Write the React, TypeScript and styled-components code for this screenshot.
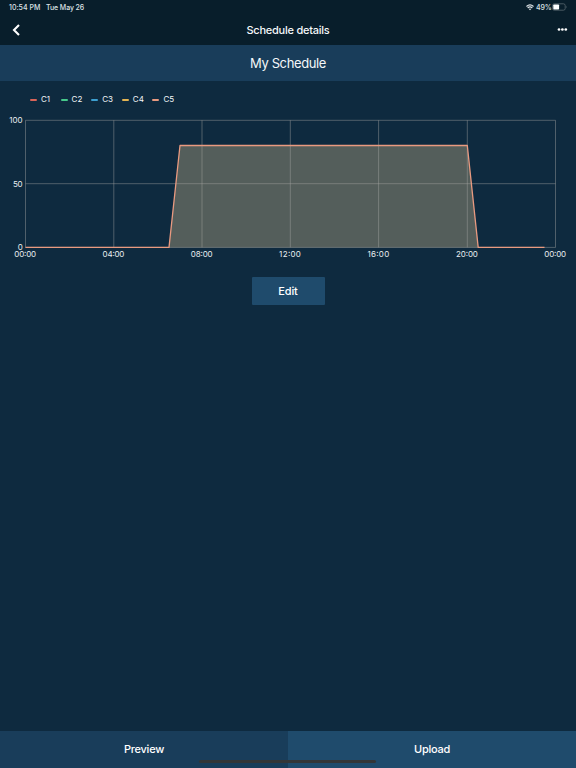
import React from "react";
import styled, { createGlobalStyle } from "styled-components";

const GlobalStyle = createGlobalStyle`
  * { box-sizing: border-box; }
  body { margin: 0; background: #0e2a3f; }
`;

const Screen = styled.main`
  display: flex;
  flex-direction: column;
  width: 100%;
  height: 100vh;
  min-height: 400px;
  position: relative;
  background: #0e2a3f;
  color: #f4f7f9;
  font-family: Inter, "Liberation Sans", sans-serif;
`;

const Header = styled.header`
  height: 45px;
  flex: none;
  background: #081e2b;
`;

const StatusBar = styled.div`
  height: 14px;
  display: flex;
  align-items: center;
  padding: 0 9px;
  font-size: 7px;
  font-weight: 500;
  line-height: 15px;
  color: #dde3e7;
`;

const Clock = styled.span`
  width: 37px;
  letter-spacing: 0.02px;
  white-space: nowrap;
`;

const DateText = styled.span`
  letter-spacing: -0.1px;
`;

const StatusIcons = styled.div`
  display: flex;
  align-items: center;
  margin-left: auto;
`;

const Percent = styled.span`
  width: 16px;
  margin-left: 2px;
  letter-spacing: -0.15px;
`;

const NavBar = styled.div`
  height: 31px;
  display: grid;
  grid-template-columns: 60px 1fr 60px;
  grid-template-rows: 31px;
  align-items: start;
  padding: 0 8px 0 12px;
`;

const NavTitle = styled.h1`
  margin: 0 0 0 -4px;
  text-align: center;
  font-size: 11px;
  line-height: 32px;
  font-weight: 500;
  letter-spacing: -0.24px;
`;

const NavButton = styled.button<{ $end?: boolean }>`
  display: flex;
  justify-content: ${({ $end }) => ($end ? "flex-end" : "flex-start")};
  align-items: center;
  height: 31px;
  padding: 0;
  border: 0;
  background: none;
  color: #fff;
`;

const ScheduleName = styled.h2`
  margin: 0;
  height: 36px;
  flex: none;
  background: #193d5a;
  text-align: center;
  font-size: 13px;
  line-height: 37px;
  font-weight: 400;
  letter-spacing: -0.38px;
`;

const Content = styled.section`
  flex: 1;
  display: flex;
  flex-direction: column;
  align-items: center;
`;

const Legend = styled.ul`
  align-self: stretch;
  display: flex;
  height: 37px;
  margin: 0;
  padding: 0 0 0 30px;
  list-style: none;
`;

const LegendItem = styled.li`
  display: flex;
  align-items: center;
  width: 30.6px;
  height: 36px;
  font-size: 8px;
  gap: 4px;
`;

const Swatch = styled.i<{ $color: string }>`
  width: 7px;
  height: 2px;
  margin-top: 1px;
  border-radius: 1px;
  background: ${({ $color }) => $color};
`;

const Chart = styled.svg`
  display: block;
  flex: none;
  width: 576px;
  height: 144px;
  overflow: visible;
  text {
    fill: #e9edf0;
    font-family: Inter, "Liberation Sans", sans-serif;
    font-size: 8px;
  }
`;

const EditButton = styled.button`
  width: 73px;
  height: 28px;
  margin: 15px 0 0;
  padding: 0;
  border: 0;
  border-radius: 1px;
  background: #1f4b6c;
  color: #fff;
  font: 500 11px/28px Inter, "Liberation Sans", sans-serif;
  letter-spacing: -0.1px;
`;

const Footer = styled.footer`
  display: grid;
  grid-template-columns: 1fr 1fr;
  height: 37px;
  flex: none;
`;

const Action = styled.button<{ $primary?: boolean }>`
  border: 0;
  padding: 0;
  background: ${({ $primary }) => ($primary ? "#1f4b6c" : "#193d5a")};
  color: #fff;
  font: 500 11px/37px Inter, "Liberation Sans", sans-serif;
  letter-spacing: -0.25px;
`;

const HomeIndicator = styled.div`
  position: absolute;
  bottom: 5px;
  left: 50%;
  width: 177px;
  height: 3px;
  margin-left: -89px;
  border-radius: 2px;
  background: #333638;
`;

const series = [
  { name: "C1", color: "#d96459" },
  { name: "C2", color: "#46c98b" },
  { name: "C3", color: "#3d9fd0" },
  { name: "C4", color: "#e3b453" },
  { name: "C5", color: "#e99a80" },
];

const ticks = [
  { label: "00:00", x: 25.5 },
  { label: "04:00", x: 113.8 },
  { label: "08:00", x: 202 },
  { label: "12:00", x: 290.3 },
  { label: "16:00", x: 378.6 },
  { label: "20:00", x: 467.3 },
  { label: "00:00", x: 555.5 },
];

const levels = [
  { label: "100", y: 2.3, width: 13.2 },
  { label: "50", y: 65.7, width: 9.6 },
  { label: "0", y: 129.4, width: 4.8 },
];

function ScheduleChart() {
  return (
    <Chart viewBox="0 0 576 144" role="img" aria-label="Schedule intensity">
      <path d="M169 129.5 180 27.5H467.3L478.2 129.5Z" fill="#545e5b" />
      <g stroke="#a9a9a5" strokeOpacity="0.48" strokeWidth="0.9">
        {levels.map((l) => <path key={l.label} d={`M25.5 ${l.y}H555.5`} />)}
        {ticks.map((t) => <path key={t.x} d={`M${t.x} 2.3V129.4`} />)}
      </g>
      <path d="M25.5 129.4H169L180 27.5H467.3L478.2 129.4H544.5" fill="none" stroke="#e99a80" strokeWidth="1.3" strokeLinejoin="round" />
      {levels.map((l) => (
        <text key={l.label} x={22.5 - l.width} y={l.y + 2.8} textLength={l.width}>{l.label}</text>
      ))}
      {ticks.map((t) => (
        <text key={t.x} x={t.x - 11.2} y="138.5" textLength="21.8">{t.label}</text>
      ))}
    </Chart>
  );
}

export default function App() {
  return (
    <>
      <GlobalStyle />
      <Screen>
        <Header>
          <StatusBar>
            <Clock>10:54 PM</Clock>
            <DateText>Tue May 26</DateText>
            <StatusIcons>
              <svg width="8" height="7" viewBox="0 0 8 7" fill="none" stroke="#e3e8eb" strokeWidth="1.15">
                <path d="M.5 2.5Q4-.8 7.5 2.5M1.7 4Q4 1.9 6.3 4" />
                <path d="M2.8 5 4 6.3 5.2 5Q4 4.1 2.8 5Z" fill="#e3e8eb" stroke="none" />
              </svg>
              <Percent>49%</Percent>
              <svg width="15" height="8" viewBox="0 0 15 8">
                <rect x=".5" y=".8" width="12.7" height="6.4" rx="1.8" fill="none" stroke="#64727a" strokeWidth=".7" />
                <rect x="1.3" y="1.5" width="5.8" height="5" rx=".8" fill="#fff" />
                <path d="M14 2.8Q15 4 14 5.2Z" fill="#64727a" />
              </svg>
            </StatusIcons>
          </StatusBar>
          <NavBar>
            <NavButton aria-label="Back">
              <svg width="8" height="12" viewBox="0 0 8 12" fill="none" stroke="currentColor" strokeWidth="2.1">
                <path d="M7 1 2 6l5 5" />
              </svg>
            </NavButton>
            <NavTitle>Schedule details</NavTitle>
            <NavButton $end aria-label="More">
              <svg width="11" height="3" viewBox="0 0 11 3" fill="currentColor">
                <circle cx="2" cy="1.5" r="1.35" />
                <circle cx="5.4" cy="1.5" r="1.35" />
                <circle cx="8.8" cy="1.5" r="1.35" />
              </svg>
            </NavButton>
          </NavBar>
        </Header>
        <ScheduleName>My Schedule</ScheduleName>
        <Content>
          <Legend>
            {series.map((s) => (
              <LegendItem key={s.name}><Swatch $color={s.color} />{s.name}</LegendItem>
            ))}
          </Legend>
          <ScheduleChart />
          <EditButton>Edit</EditButton>
        </Content>
        <Footer>
          <Action>Preview</Action>
          <Action $primary>Upload</Action>
        </Footer>
        <HomeIndicator />
      </Screen>
    </>
  );
}
